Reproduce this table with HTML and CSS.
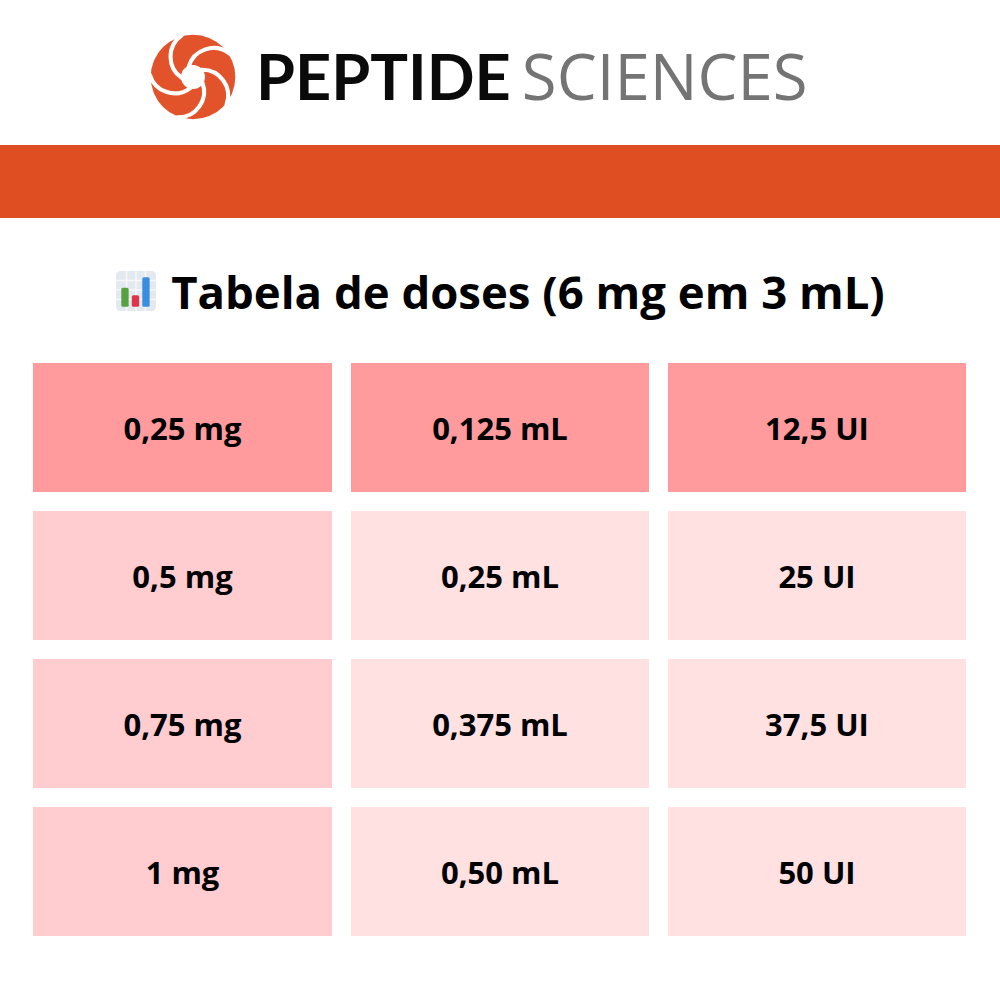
FILE: index.html
```html
<!DOCTYPE html>
<html lang="pt">
<head>
<meta charset="utf-8">
<title>Tabela de doses</title>
<link rel="stylesheet" href="styles.css">
</head>
<body>
<header class="brand">
  <svg class="brand-mark" viewBox="-50 -50 100 100" aria-hidden="true">
    <defs>
      <path id="gap" d="M -4.7 -11.05 A 28 28 0 0 1 39.4 -25.6" />
    </defs>
    <circle cx="0" cy="0" r="46" fill="#e2532b"/>
    <circle cx="0" cy="0" r="13" fill="#fff"/>
    <g fill="none" stroke="#fff" stroke-width="4.5" stroke-linecap="round">
      <use href="#gap"/>
      <use href="#gap" transform="rotate(72)"/>
      <use href="#gap" transform="rotate(144)"/>
      <use href="#gap" transform="rotate(216)"/>
      <use href="#gap" transform="rotate(288)"/>
    </g>
  </svg>
  <div class="brand-name"><span class="brand-strong">PEPTIDE</span><span class="brand-light">SCIENCES</span></div>
</header>
<div class="band"></div>
<h1 class="title">
  <svg class="chart-icon" viewBox="0 0 40 40" aria-hidden="true">
    <rect x="1" y="1" width="38" height="38" rx="4" fill="#e4e9ef"/>
    <g stroke="#f6f8fa" stroke-width="1.4">
      <line x1="1" y1="10" x2="39" y2="10"/>
      <line x1="1" y1="19" x2="39" y2="19"/>
      <line x1="1" y1="28" x2="39" y2="28"/>
      <line x1="11" y1="1" x2="11" y2="39"/>
      <line x1="20" y1="1" x2="20" y2="39"/>
      <line x1="29" y1="1" x2="29" y2="39"/>
    </g>
    <rect x="6" y="17" width="7" height="18" rx="1.5" fill="#58a141"/>
    <rect x="16" y="24" width="7" height="11" rx="1.5" fill="#e0344c"/>
    <rect x="26" y="7" width="7" height="28" rx="1.5" fill="#3a8ee0"/>
  </svg>
  <span>Tabela de doses (6 mg em 3 mL)</span>
</h1>
<main class="doses">
  <div class="cell head">0,25 mg</div>
  <div class="cell head">0,125 mL</div>
  <div class="cell head">12,5 UI</div>

  <div class="cell first">0,5 mg</div>
  <div class="cell">0,25 mL</div>
  <div class="cell">25 UI</div>

  <div class="cell first">0,75 mg</div>
  <div class="cell">0,375 mL</div>
  <div class="cell">37,5 UI</div>

  <div class="cell first">1 mg</div>
  <div class="cell">0,50 mL</div>
  <div class="cell">50 UI</div>
</main>
</body>
</html>
```
FILE: styles.css
```css
html, body {
  margin: 0;
  padding: 0;
  background: #ffffff;
}
body {
  width: 1000px;
  font-family: "Open Sans", "Liberation Sans", sans-serif;
  color: #000;
}
.brand {
  height: 145px;
  display: flex;
  align-items: center;
  padding-left: 147px;
  padding-top: 6px;
  box-sizing: border-box;
  gap: 17px;
}
.brand-mark {
  width: 92px;
  height: 92px;
  flex: none;
  margin-top: 2px;
}
.brand-name {
  display: flex;
  align-items: baseline;
  gap: 11px;
  line-height: 1;
}
.brand-strong {
  font-family: "Lato", "Open Sans", sans-serif;
  font-weight: 700;
  font-size: 63px;
  color: #0a0a0a;
}
.brand-light {
  font-family: "Open Sans", "Lato", sans-serif;
  font-weight: 400;
  font-size: 63.5px;
  color: #747474;
}
.band {
  height: 73px;
  background: #df4e23;
}
.title {
  margin: 0;
  height: 145px;
  display: flex;
  align-items: center;
  justify-content: center;
  gap: 14px;
  font-size: 45.5px;
  font-weight: 700;
  box-sizing: border-box;
}
.chart-icon {
  width: 42px;
  height: 42px;
  flex: none;
}
.doses {
  display: grid;
  grid-template-columns: 299px 298px 298px;
  grid-auto-rows: 129px;
  gap: 19px;
  padding: 0 34px 0 33px;
}
.cell {
  display: flex;
  align-items: center;
  justify-content: center;
  font-size: 31px;
  font-weight: 700;
  background: #ffe1e2;
}
.cell.first {
  background: #ffcdcf;
}
.cell.head {
  background: #ff9b9c;
}
```
